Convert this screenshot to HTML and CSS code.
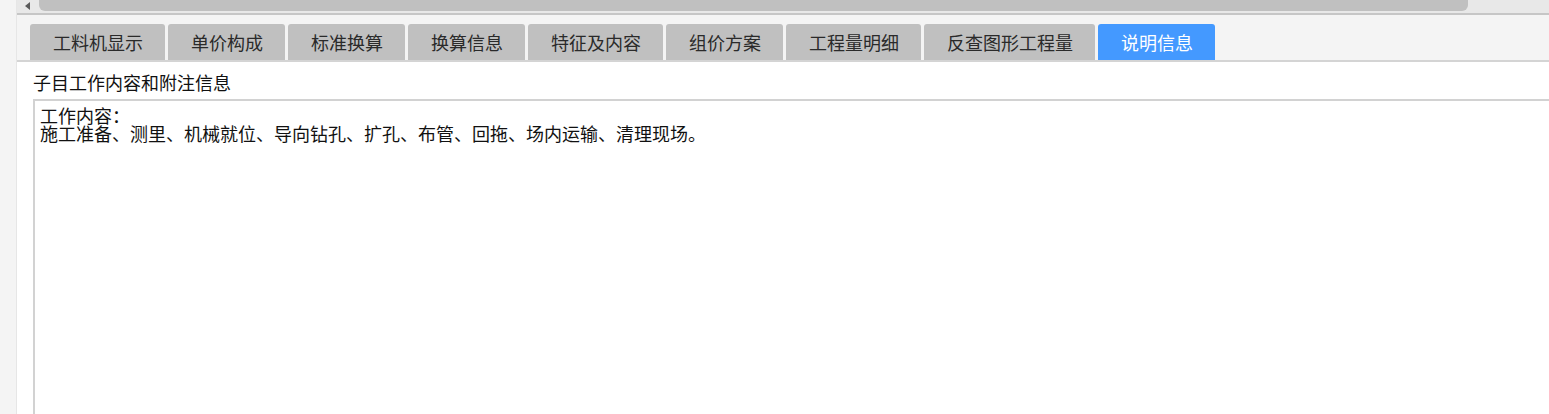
FILE: index.html
```html
<!DOCTYPE html>
<html lang="zh-CN">
<head>
<meta charset="utf-8">
<title>说明信息</title>
<link rel="stylesheet" href="styles.css">
</head>
<body>
<div class="app">
  <div class="side"></div>
  <div class="main">
    <div class="hscroll">
      <span class="arrow"></span>
      <span class="thumb"></span>
    </div>
    <div class="tabs">
      <div class="tab">工料机显示</div>
      <div class="tab">单价构成</div>
      <div class="tab">标准换算</div>
      <div class="tab">换算信息</div>
      <div class="tab">特征及内容</div>
      <div class="tab">组价方案</div>
      <div class="tab">工程量明细</div>
      <div class="tab">反查图形工程量</div>
      <div class="tab active">说明信息</div>
    </div>
    <div class="content">
      <div class="label">子目工作内容和附注信息</div>
      <div class="memo">
        <div class="line">工作内容：</div>
        <div class="line">施工准备、测里、机械就位、导向钻孔、扩孔、布管、回拖、场内运输、清理现场。</div>
      </div>
    </div>
  </div>
</div>
</body>
</html>
```

FILE: styles.css
```css
html, body {
  margin: 0;
  padding: 0;
  height: 100%;
  overflow: hidden;
  background: #ffffff;
  font-family: "Noto Sans CJK SC", "Noto Sans", sans-serif;
}

.app {
  display: flex;
  height: 414px;
}

.side {
  width: 16px;
  flex: 0 0 16px;
  background: #f4f4f4;
  border-right: 1px solid #e6e6e6;
}

.main {
  flex: 1;
  display: flex;
  flex-direction: column;
  min-width: 0;
}

.hscroll {
  height: 13px;
  background: #e8e8e8;
  border-bottom: 2px solid #c6c6c6;
  display: flex;
  align-items: flex-start;
  padding-left: 8px;
}

.arrow {
  width: 0;
  height: 0;
  margin-top: 2px;
  border-top: 4px solid transparent;
  border-bottom: 4px solid transparent;
  border-right: 5px solid #5a5a5a;
}

.thumb {
  margin-left: 9px;
  width: 1429px;
  height: 11px;
  background: #c0c0c0;
  border-radius: 0 0 6px 6px;
}

.tabs {
  background: #f4f4f4;
  display: flex;
  gap: 3px;
  padding: 9px 0 0 13px;
  border-bottom: 2px solid #d4d4d4;
}

.tab {
  height: 36px;
  line-height: 36px;
  padding: 0 22px 0 23px;
  background: #c0c0c0;
  color: #2a2a2a;
  font-size: 18px;
  border-radius: 3px 3px 0 0;
  white-space: nowrap;
}

.tab.active {
  background: #4499ff;
  color: #ffffff;
}

.content {
  flex: 1;
  display: flex;
  flex-direction: column;
  padding: 11px 0 0 16px;
}

.label {
  font-size: 18px;
  line-height: 18px;
  color: #111111;
  margin-bottom: 8px;
}

.memo {
  flex: 1;
  border-top: 2px solid #d2d2d2;
  border-left: 2px solid #d2d2d2;
  padding: 5px 0 0 5px;
  font-size: 18px;
  color: #111111;
}

.line {
  white-space: nowrap;
  height: 18px;
  line-height: 18px;
}
```
